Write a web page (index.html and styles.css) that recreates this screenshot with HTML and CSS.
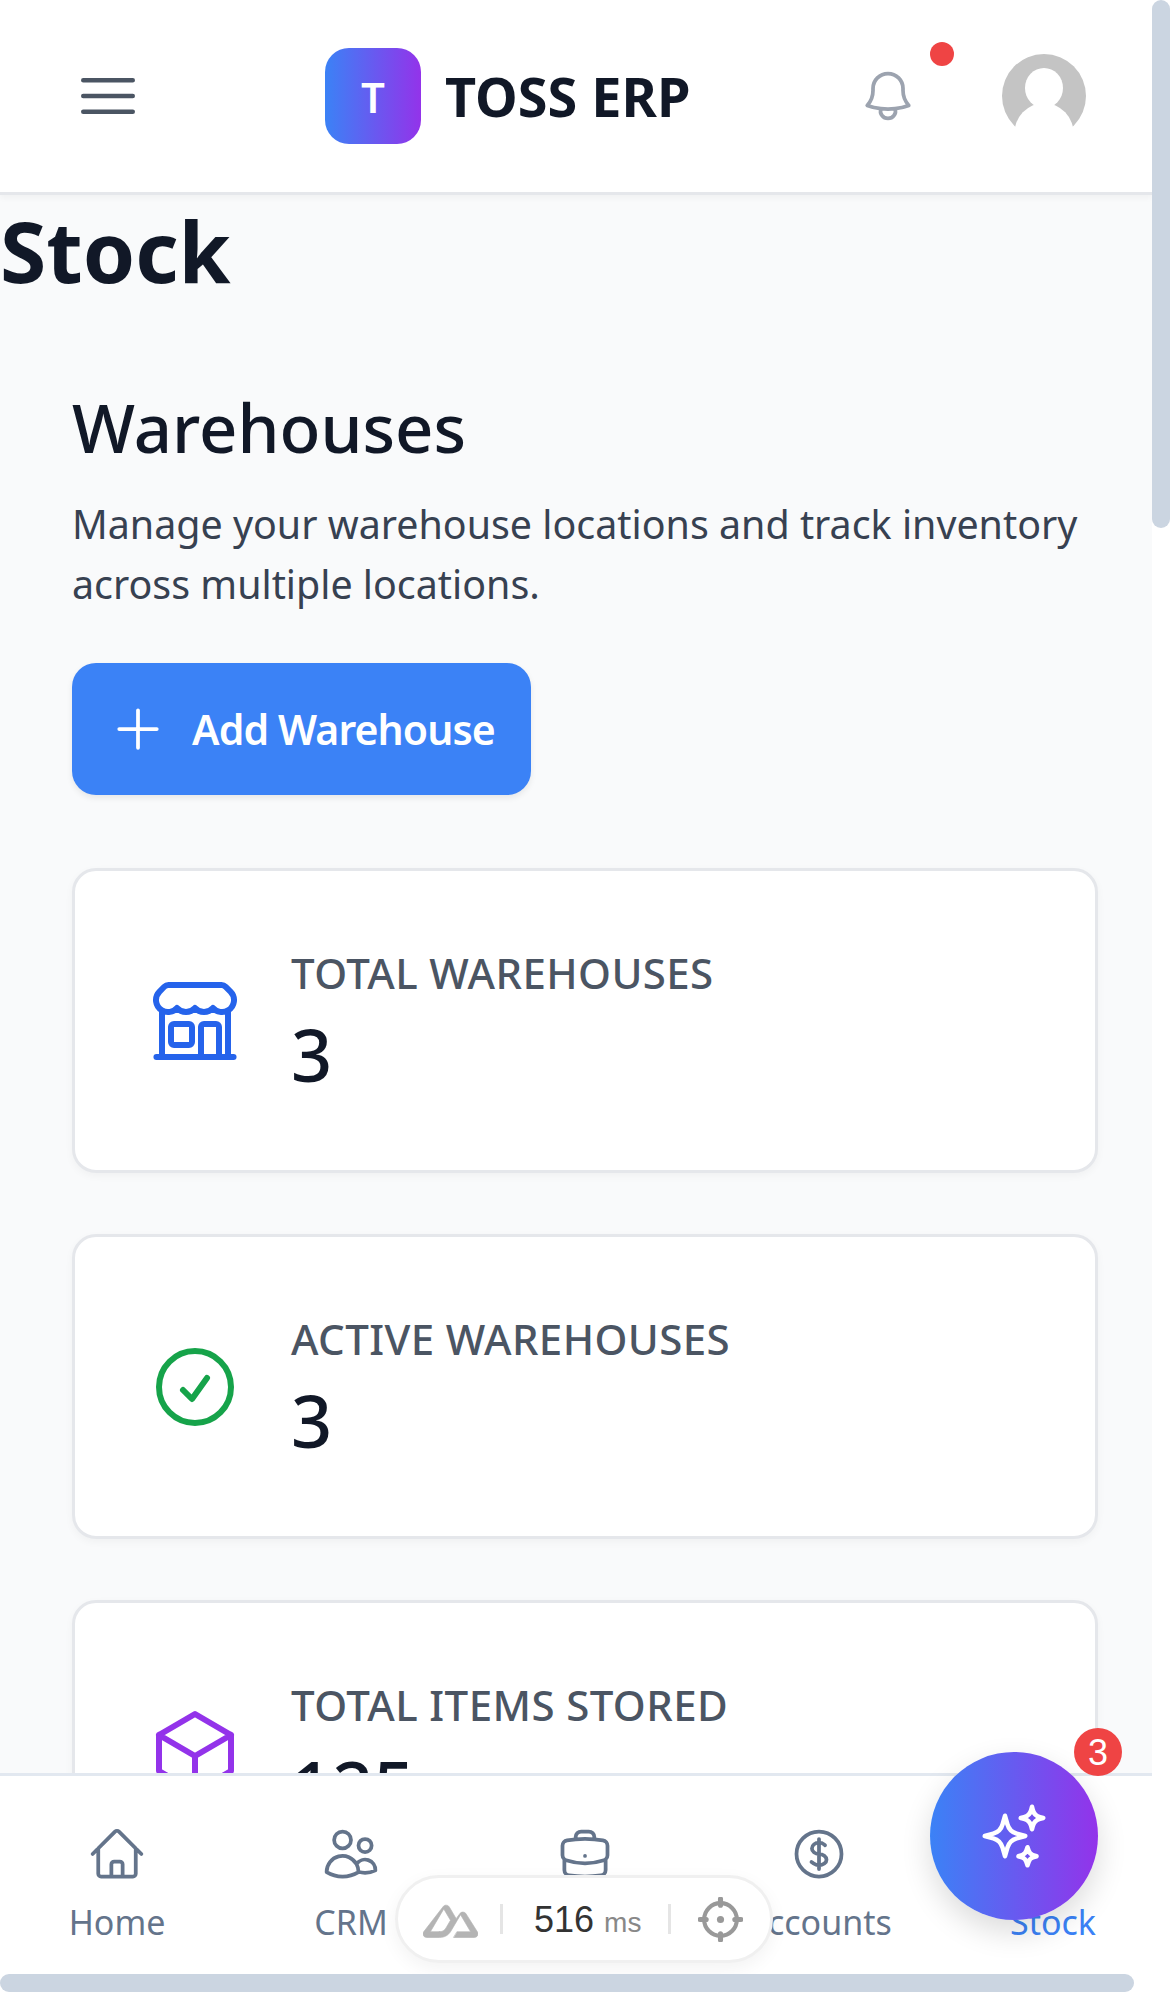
FILE: index.html
```html
<!DOCTYPE html>
<html lang="en">
<head>
  <meta charset="UTF-8" />
  <meta name="viewport" content="width=device-width, initial-scale=1" />
  <title>TOSS ERP - Stock</title>
  <link rel="stylesheet" href="styles.css">
</head>
<body>

  <div class="frame">
    <header class="topbar">
      <svg class="menu-icon" viewBox="0 0 24 24"><path d="M3.75 6.75h16.5M3.75 12h16.5m-16.5 5.25h16.5"/></svg>
      <div class="brand">
        <div class="brand-mark">T</div>
        <span class="brand-name">TOSS ERP</span>
      </div>
      <div class="topbar-right">
        <div class="bell">
          <svg viewBox="0 0 24 24"><path d="M14.857 17.082a23.848 23.848 0 0 0 5.454-1.31A8.967 8.967 0 0 1 18 9.75V9A6 6 0 0 0 6 9v.75a8.967 8.967 0 0 1-2.312 6.022c1.733.64 3.56 1.085 5.455 1.31m5.714 0a24.255 24.255 0 0 1-5.714 0m5.714 0a3 3 0 1 1-5.714 0"/></svg>
          <span class="bell-dot"></span>
        </div>
        <svg class="avatar" viewBox="0 0 84 84">
          <circle cx="42" cy="42" r="42" fill="#c4c4c4"/>
          <ellipse cx="42" cy="34" rx="19" ry="20" fill="#fff"/>
          <ellipse cx="42" cy="81" rx="30" ry="32" fill="#fff"/>
        </svg>
      </div>
    </header>

    <main class="content">
      <h1 class="page-title">Stock</h1>
      <section class="warehouses">
        <h2>Warehouses</h2>
        <p class="intro">Manage your warehouse locations and track inventory across multiple locations.</p>
        <button class="add-btn">
          <svg viewBox="0 0 24 24"><path d="M12 4.5v15m7.5-7.5h-15"/></svg>
          Add Warehouse
        </button>

        <div class="stat-card">
          <svg class="stat-icon blue" viewBox="0 0 24 24"><path d="M13.5 21v-7.5a.75.75 0 0 1 .75-.75h3a.75.75 0 0 1 .75.75V21m-4.5 0H2.36m11.14 0H18m0 0h3.64m-1.39 0V9.349M3.75 21V9.349m0 0a3.001 3.001 0 0 0 3.75-.615A2.993 2.993 0 0 0 9.75 9.75c.896 0 1.7-.393 2.25-1.016a2.993 2.993 0 0 0 2.25 1.016c.896 0 1.7-.393 2.25-1.016a3.001 3.001 0 0 0 3.75.614m-16.5 0a3.004 3.004 0 0 1-.621-4.72l1.189-1.19A1.5 1.5 0 0 1 5.378 3h13.243a1.5 1.5 0 0 1 1.06.44l1.19 1.189a3 3 0 0 1-.621 4.72M6.75 18h3.75a.75.75 0 0 0 .75-.75V13.5a.75.75 0 0 0-.75-.75H6.75a.75.75 0 0 0-.75.75v3.75c0 .414.336.75.75.75Z"/></svg>
          <div class="stat-text">
            <p class="stat-label">TOTAL WAREHOUSES</p>
            <p class="stat-value">3</p>
          </div>
        </div>

        <div class="stat-card">
          <svg class="stat-icon green" viewBox="0 0 24 24"><path d="M9 12.75 11.25 15 15 9.75M21 12a9 9 0 1 1-18 0 9 9 0 0 1 18 0Z"/></svg>
          <div class="stat-text">
            <p class="stat-label">ACTIVE WAREHOUSES</p>
            <p class="stat-value">3</p>
          </div>
        </div>

        <div class="stat-card">
          <svg class="stat-icon purple" viewBox="0 0 24 24"><path d="m21 7.5-9-5.25L3 7.5m18 0-9 5.25m9-5.25v9l-9 5.25M3 7.5l9 5.25M3 7.5v9l9 5.25m0-9v9"/></svg>
          <div class="stat-text">
            <p class="stat-label">TOTAL ITEMS STORED</p>
            <p class="stat-value">125</p>
          </div>
        </div>
      </section>
    </main>

    <nav class="bottom-nav">
      <a href="#">
        <svg viewBox="0 0 24 24"><path d="m2.25 12 8.954-8.955c.44-.439 1.152-.439 1.591 0L21.75 12M4.5 9.75v10.125c0 .621.504 1.125 1.125 1.125H9.75v-4.875c0-.621.504-1.125 1.125-1.125h2.25c.621 0 1.125.504 1.125 1.125V21h4.125c.621 0 1.125-.504 1.125-1.125V9.75M8.25 21h8.25"/></svg>
        <span>Home</span>
      </a>
      <a href="#">
        <svg viewBox="0 0 24 24"><path d="M15 19.128a9.38 9.38 0 0 0 2.625.372 9.337 9.337 0 0 0 4.121-.952 4.125 4.125 0 0 0-7.533-2.493M15 19.128v-.003c0-1.113-.285-2.16-.786-3.07M15 19.128v.106A12.318 12.318 0 0 1 8.624 21c-2.331 0-4.512-.645-6.374-1.766l-.001-.109a6.375 6.375 0 0 1 11.964-3.07M12 6.375a3.375 3.375 0 1 1-6.75 0 3.375 3.375 0 0 1 6.75 0Zm8.25 2.25a2.625 2.625 0 1 1-5.25 0 2.625 2.625 0 0 1 5.25 0Z"/></svg>
        <span>CRM</span>
      </a>
      <a href="#">
        <svg viewBox="0 0 24 24"><path d="M20.25 14.15v4.25c0 1.094-.787 2.036-1.872 2.18-2.087.277-4.216.42-6.378.42s-4.291-.143-6.378-.42c-1.085-.144-1.872-1.086-1.872-2.18v-4.25m16.5 0a2.18 2.18 0 0 0 .75-1.661V8.706c0-1.081-.768-2.015-1.837-2.175a48.114 48.114 0 0 0-3.413-.387m4.5 8.006c-.194.165-.42.295-.673.38A23.978 23.978 0 0 1 12 15.75c-2.648 0-5.195-.429-7.577-1.22a2.016 2.016 0 0 1-.673-.38m0 0A2.18 2.18 0 0 1 3 12.489V8.706c0-1.081.768-2.015 1.837-2.175a48.111 48.111 0 0 1 3.413-.387m7.5 0V5.25A2.25 2.25 0 0 0 13.5 3h-3a2.25 2.25 0 0 0-2.25 2.25v.894m7.5 0a48.667 48.667 0 0 0-7.5 0M12 12.75h.008v.008H12v-.008Z"/></svg>
      </a>
      <a href="#">
        <svg viewBox="0 0 24 24"><path d="M12 6v12m-3-2.818.879.659c1.171.879 3.07.879 4.242 0 1.172-.879 1.172-2.303 0-3.182C13.536 12.219 12.768 12 12 12c-.725 0-1.45-.22-2.003-.659-1.106-.879-1.106-2.303 0-3.182s2.9-.879 4.006 0l.415.33M21 12a9 9 0 1 1-18 0 9 9 0 0 1 18 0Z"/></svg>
        <span>Accounts</span>
      </a>
      <a href="#" class="active">
        <span>Stock</span>
      </a>
    </nav>

    <div class="perf-pill">
      <svg class="perf-logo" viewBox="0 0 24 24"><path d="M13.4642 19.8295h8.9218c.2834 0 .5618-.0723.8072-.2098a1.5899 1.5899 0 0 0 .5908-.5732 1.5293 1.5293 0 0 0 .216-.783 1.529 1.529 0 0 0-.2167-.7828L18.7916 9.5578a1.5904 1.5904 0 0 0-.5907-.573 1.6524 1.6524 0 0 0-.807-.2099c-.2833 0-.5616.0724-.807.2098a1.5904 1.5904 0 0 0-.5907.5731L14.4641 11.62l-2.9945-5.0923a1.5913 1.5913 0 0 0-.591-.573 1.6533 1.6533 0 0 0-.8071-.2098c-.2834 0-.5617.0723-.8072.2098a1.5913 1.5913 0 0 0-.591.573L.2168 17.4817A1.5292 1.5292 0 0 0 0 18.2646c-.0001.2748.0744.5448.216.783a1.59 1.59 0 0 0 .5908.5732c.2454.1375.5238.2098.8072.2098h5.6003c2.2189 0 3.8554-.9454 4.9813-2.7899l2.7337-4.6495 1.4642-2.4882 4.3944 7.4747h-5.8586Zm-6.3414-2.4906-3.9087-.0009 5.8591-9.9654 2.9234 4.9827-1.9574 3.3298c-.7477 1.2116-1.5973 1.6538-2.9164 1.6538z"/></svg>
      <span class="perf-sep"></span>
      <span class="perf-time">516 <small>ms</small></span>
      <span class="perf-sep"></span>
      <svg class="perf-target" viewBox="0 0 44 44">
        <circle cx="22" cy="22" r="16" stroke-width="4"/>
        <circle class="perf-target-dot" cx="22" cy="22" r="3.5"/>
        <path d="M22 2v6M22 36v6M2 22h6M36 22h6" stroke-width="5"/>
      </svg>
    </div>

    <button class="fab">
      <svg viewBox="0 0 24 24"><path d="M9.813 15.904 9 18.75l-.813-2.846a4.5 4.5 0 0 0-3.09-3.09L2.25 12l2.846-.813a4.5 4.5 0 0 0 3.09-3.09L9 5.25l.813 2.846a4.5 4.5 0 0 0 3.09 3.09L15.75 12l-2.846.813a4.5 4.5 0 0 0-3.09 3.09ZM18.259 8.715 18 9.75l-.259-1.035a3.375 3.375 0 0 0-2.455-2.456L14.25 6l1.036-.259a3.375 3.375 0 0 0 2.455-2.456L18 2.25l.259 1.035a3.375 3.375 0 0 0 2.456 2.456L21.75 6l-1.035.259a3.375 3.375 0 0 0-2.456 2.456ZM16.894 20.567 16.5 21.75l-.394-1.183a2.25 2.25 0 0 0-1.423-1.423L13.5 18.75l1.183-.394a2.25 2.25 0 0 0 1.423-1.423l.394-1.183.394 1.183a2.25 2.25 0 0 0 1.423 1.423l1.183.394-1.183.394a2.25 2.25 0 0 0-1.423 1.423Z"/></svg>
      <span class="fab-badge">3</span>
    </button>
  </div>

  <div class="scroll-thumb-v"></div>
  <div class="scroll-thumb-h"></div>

</body>
</html>
```

FILE: styles.css
```css
/* General Styling */
html, body {
  margin: 0;
  height: 100%;
  overflow: hidden;
  background-color: #fff;
}
body {
  width: 1170px;
  height: 1992px;
  position: relative;
  font-family: "Noto Sans", "Open Sans", sans-serif;
  color: #111827;
}
svg {
  fill: none;
  stroke: currentColor;
  stroke-width: 1.5;
  stroke-linecap: round;
  stroke-linejoin: round;
  display: block;
}
.frame {
  width: 1152px;
  height: 1974px;
  display: flex;
  flex-direction: column;
  position: relative;
  overflow: hidden;
  background-color: #f9fafb;
}

/* Top bar */
.topbar {
  height: 192px;
  flex-shrink: 0;
  background-color: #fff;
  border-bottom: 3px solid #e5e7eb;
  box-shadow: 0 3px 6px rgba(0, 0, 0, 0.04);
  display: flex;
  align-items: center;
  padding: 0 66px 0 72px;
  position: relative;
  z-index: 2;
}
.menu-icon {
  width: 72px;
  height: 72px;
  color: #4b5563;
}
.brand {
  display: flex;
  align-items: center;
  gap: 24px;
  margin-left: 181px;
}
.brand-mark {
  width: 96px;
  height: 96px;
  border-radius: 24px;
  background: linear-gradient(90deg, #3b82f6, #9333ea);
  color: #fff;
  font-size: 42px;
  font-weight: 600;
  display: flex;
  align-items: center;
  justify-content: center;
}
.brand-name {
  font-size: 54px;
  font-weight: 700;
  color: #111827;
}
.topbar-right {
  margin-left: auto;
  display: flex;
  align-items: center;
  gap: 84px;
}
.bell {
  position: relative;
  color: #9ca3af;
}
.bell svg {
  width: 60px;
  height: 60px;
}
.bell-dot {
  position: absolute;
  top: -24px;
  right: -36px;
  width: 24px;
  height: 24px;
  border-radius: 50%;
  background-color: #ef4444;
}
.avatar {
  width: 84px;
  height: 84px;
  stroke: none;
}

/* Content */
.content {
  flex: 1;
  min-height: 0;
}
.page-title {
  margin: 0;
  font-size: 84px;
  font-weight: 700;
  line-height: 112px;
}
.warehouses {
  padding: 0 54px 0 72px;
}
.warehouses h2 {
  margin: 72px 0 0;
  font-size: 67px;
  font-weight: 500;
  line-height: 96px;
}
.intro {
  margin: 19px 0 0;
  font-size: 39.4px;
  line-height: 60px;
  color: #374151;
}
.add-btn {
  margin-top: 49px;
  height: 132px;
  width: 459px;
  padding: 0 36px;
  display: flex;
  align-items: center;
  gap: 24px;
  border: none;
  border-radius: 24px;
  background-color: #3b82f6;
  color: #fff;
  font-family: inherit;
  font-size: 41px;
  font-weight: 600;
  letter-spacing: -0.9px;
  white-space: nowrap;
  box-shadow: 0 3px 6px rgba(0, 0, 0, 0.08);
}
.add-btn svg {
  width: 60px;
  height: 60px;
  flex-shrink: 0;
}
.stat-card {
  margin-top: 73px;
  height: 305px;
  box-sizing: border-box;
  background-color: #fff;
  border: 3px solid #e5e7eb;
  border-radius: 24px;
  box-shadow: 0 3px 9px rgba(0, 0, 0, 0.04);
  padding: 0 72px;
  display: flex;
  align-items: center;
  gap: 48px;
}
.stat-card + .stat-card {
  margin-top: 61px;
}
.stat-icon {
  width: 96px;
  height: 96px;
  flex-shrink: 0;
}
.blue { color: #2563eb; }
.green { color: #16a34a; }
.purple { color: #9333ea; }
.stat-text {
  padding-top: 5px;
}
.stat-label {
  margin: 0;
  font-size: 42px;
  font-weight: 500;
  line-height: 56px;
  letter-spacing: 0.4px;
  color: #4b5563;
}
.stat-value {
  margin: 5px 0 0;
  font-size: 72px;
  font-weight: 500;
  line-height: 96px;
  color: #111827;
}

/* Bottom nav */
.bottom-nav {
  height: 198px;
  width: 1170px;
  flex-shrink: 0;
  background-color: #fff;
  border-top: 3px solid #e2e8f0;
  display: grid;
  grid-template-columns: repeat(5, 234px);
  position: relative;
}
.bottom-nav a {
  display: flex;
  flex-direction: column;
  align-items: center;
  padding-top: 48px;
  color: #64748b;
  text-decoration: none;
  font-size: 34px;
  line-height: 48px;
}
.bottom-nav a svg {
  width: 60px;
  height: 60px;
  margin-bottom: 14px;
}
.bottom-nav a.active {
  color: #3b82f6;
  padding-top: 122px;
}

/* Dev tools pill */
.perf-pill {
  position: absolute;
  left: 395px;
  top: 1875px;
  width: 378px;
  height: 88px;
  box-sizing: border-box;
  background-color: #fff;
  border: 3px solid #f0f0f0;
  border-radius: 44px;
  box-shadow: 0 6px 18px rgba(0, 0, 0, 0.05);
  display: flex;
  align-items: center;
  padding-left: 25px;
  font-family: "Liberation Sans", Arial, sans-serif;
}
.perf-logo {
  width: 55px;
  height: 55px;
  fill: #b4b4b4;
  stroke: #b4b4b4;
  stroke-width: 0.3;
}
.perf-sep {
  width: 3px;
  height: 30px;
  flex-shrink: 0;
  background-color: #e5e5e5;
  margin-left: 22px;
}
.perf-time {
  font-size: 36px;
  line-height: 44px;
  padding-top: 4px;
  color: #333;
  margin-left: 31px;
  width: 134px;
  white-space: nowrap;
}
.perf-time small {
  font-size: 28px;
  color: #888;
}
.perf-time + .perf-sep {
  margin-left: 0;
}
.perf-target {
  width: 45px;
  height: 45px;
  margin-left: 27px;
  color: #999;
}
.perf-target-dot {
  fill: #999;
  stroke: none;
}

/* Floating button */
.fab {
  position: absolute;
  left: 930px;
  top: 1752px;
  width: 168px;
  height: 168px;
  padding: 0;
  border: none;
  border-radius: 50%;
  background: linear-gradient(90deg, #3b82f6, #9333ea);
  color: #fff;
  display: flex;
  align-items: center;
  justify-content: center;
  box-shadow: 0 12px 30px rgba(0, 0, 0, 0.14);
}
.fab svg {
  width: 72px;
  height: 72px;
}
.fab-badge {
  position: absolute;
  top: -24px;
  right: -24px;
  width: 48px;
  height: 48px;
  border-radius: 50%;
  background-color: #ef4444;
  color: #fff;
  font-family: inherit;
  font-size: 36px;
  line-height: 50px;
  text-align: center;
}

/* Painted scrollbars */
.scroll-thumb-v {
  position: absolute;
  left: 1152px;
  top: 0;
  width: 18px;
  height: 528px;
  background-color: #cbd5e1;
  border-radius: 9px;
}
.scroll-thumb-h {
  position: absolute;
  left: 0;
  top: 1974px;
  width: 1134px;
  height: 18px;
  background-color: #cbd5e1;
  border-radius: 9px;
}
```
